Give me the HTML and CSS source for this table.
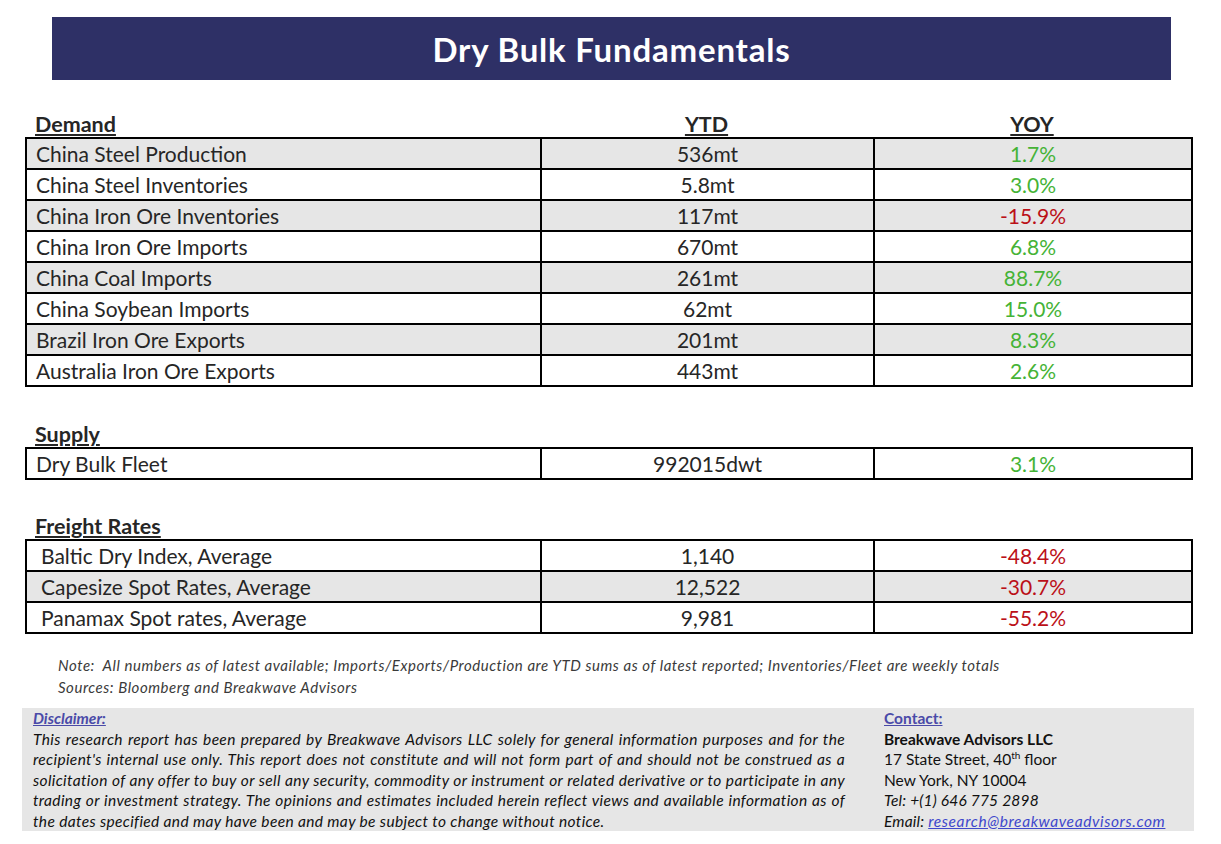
FILE: index.html
```html
<!DOCTYPE html>
<html>
<head>
<meta charset="utf-8">
<link rel="stylesheet" href="styles.css">
</head>
<body>
<div class="page">
  <div class="banner">Dry Bulk Fundamentals</div>

  <div class="section demand">
    <div class="sec-head">
      <span class="sec-title">Demand</span>
      <span class="col-head">YTD</span>
      <span class="col-head">YOY</span>
    </div>
    <table class="data">
      <colgroup><col class="c1"><col class="c2"><col class="c3"></colgroup>
      <tr class="alt"><td>China Steel Production</td><td>536mt</td><td class="up">1.7%</td></tr>
      <tr><td>China Steel Inventories</td><td>5.8mt</td><td class="up">3.0%</td></tr>
      <tr class="alt"><td>China Iron Ore Inventories</td><td>117mt</td><td class="down">-15.9%</td></tr>
      <tr><td>China Iron Ore Imports</td><td>670mt</td><td class="up">6.8%</td></tr>
      <tr class="alt"><td>China Coal Imports</td><td>261mt</td><td class="up">88.7%</td></tr>
      <tr><td>China Soybean Imports</td><td>62mt</td><td class="up">15.0%</td></tr>
      <tr class="alt"><td>Brazil Iron Ore Exports</td><td>201mt</td><td class="up">8.3%</td></tr>
      <tr><td>Australia Iron Ore Exports</td><td>443mt</td><td class="up">2.6%</td></tr>
    </table>
  </div>

  <div class="section supply">
    <div class="sec-head">
      <span class="sec-title">Supply</span>
    </div>
    <table class="data">
      <colgroup><col class="c1"><col class="c2"><col class="c3"></colgroup>
      <tr><td>Dry Bulk Fleet</td><td>992015dwt</td><td class="up">3.1%</td></tr>
    </table>
  </div>

  <div class="section freight">
    <div class="sec-head">
      <span class="sec-title">Freight Rates</span>
    </div>
    <table class="data indent">
      <colgroup><col class="c1"><col class="c2"><col class="c3"></colgroup>
      <tr><td>Baltic Dry Index, Average</td><td>1,140</td><td class="down">-48.4%</td></tr>
      <tr class="alt"><td>Capesize Spot Rates, Average</td><td>12,522</td><td class="down">-30.7%</td></tr>
      <tr><td>Panamax Spot rates, Average</td><td>9,981</td><td class="down">-55.2%</td></tr>
    </table>
  </div>

  <div class="note">
    <p>Note:&nbsp; All numbers as of latest available; Imports/Exports/Production are YTD sums as of latest reported; Inventories/Fleet are weekly totals</p>
    <p>Sources: Bloomberg and Breakwave Advisors</p>
  </div>

  <div class="footer">
    <div class="disclaimer">
      <div class="foot-title">Disclaimer:</div>
      <p>
        <span class="jl">This research report has been prepared by Breakwave Advisors LLC solely for general information purposes and for the</span>
        <span class="jl">recipient's internal use only. This report does not constitute and will not form part of and should not be construed as a</span>
        <span class="jl">solicitation of any offer to buy or sell any security, commodity or instrument or related derivative or to participate in any</span>
        <span class="jl">trading or investment strategy. The opinions and estimates included herein reflect views and available information as of</span>
        <span class="ll">the dates specified and may have been and may be subject to change without notice.</span>
      </p>
    </div>
    <div class="contact">
      <div class="foot-title">Contact:</div>
      <div class="firm">Breakwave Advisors LLC</div>
      <div>17 State Street, 40<sup>th</sup> floor</div>
      <div>New York, NY 10004</div>
      <div class="it">Tel: +(1) 646 775 2898</div>
      <div class="it">Email: <a href="#">research@breakwaveadvisors.com</a></div>
    </div>
  </div>
</div>
</body>
</html>
```

FILE: styles.css
```css
html, body {
  margin: 0;
  padding: 0;
  background: #ffffff;
}
body {
  font-family: Lato, "Open Sans", "Liberation Sans", sans-serif;
  color: #262626;
}
.page {
  width: 1221px;
  padding-top: 17px;
}
.banner {
  margin: 0 0 0 52px;
  width: 1119px;
  height: 63px;
  background: #2e3066;
  color: #ffffff;
  font-weight: 700;
  font-size: 33px;
  line-height: 65px;
  text-align: center;
  letter-spacing: 0.8px;
}
.section {
  margin-left: 25px;
  width: 1166px;
}
.demand { margin-top: 33px; }
.supply { margin-top: 36px; }
.freight { margin-top: 35px; }
.sec-head {
  display: grid;
  grid-template-columns: 515px 333px 318px;
  height: 24px;
  font-size: 21.5px;
  font-weight: 700;
  line-height: 22px;
  color: #262626;
}
.sec-title {
  padding-left: 10px;
  text-decoration: underline;
  text-decoration-thickness: 2px;
  text-underline-offset: 2px;
}
.col-head {
  text-align: center;
  text-decoration: underline;
  text-decoration-thickness: 2px;
  text-underline-offset: 2px;
}
table.data {
  border-collapse: collapse;
  width: 1166px;
  table-layout: fixed;
  font-size: 21px;
}
col.c1 { width: 515px; }
col.c2 { width: 333px; }
col.c3 { width: 318px; }
table.data td {
  border: 2px solid #000;
  height: 29px;
  padding: 0;
  line-height: 29px;
  text-align: center;
  white-space: nowrap;
}
table.data td:first-child {
  text-align: left;
  padding-left: 9px;
}
table.data.indent td:first-child {
  padding-left: 14px;
}
tr.alt td { background: #e6e6e6; }
td.up { color: #45b336; }
td.down { color: #bb1018; }

.note {
  margin: 20px 0 0 58px;
  font-style: italic;
  font-size: 15px;
  letter-spacing: 0.55px;
  color: #3a3a3a;
}
.note p {
  margin: 0;
  line-height: 22px;
}
.footer {
  margin: 10px 0 0 22px;
  width: 1172px;
  height: 123px;
  box-sizing: border-box;
  background: #e6e6e6;
  display: flex;
  padding: 0 0 0 11px;
  font-size: 15.5px;
  line-height: 20.5px;
  color: #111;
}
.disclaimer {
  width: 812px;
  font-style: italic;
  letter-spacing: 0.35px;
}
.disclaimer p {
  margin: 0;
}
.jl {
  display: block;
  text-align: justify;
  text-align-last: justify;
  white-space: nowrap;
}
.ll {
  display: block;
  white-space: nowrap;
}
.foot-title {
  font-weight: 700;
  font-style: italic;
  color: #4a4aa8;
  text-decoration: underline;
  display: inline-block;
  letter-spacing: 0;
}
.contact {
  margin-left: 39px;
}
.contact .foot-title {
  font-style: normal;
}
.firm { font-weight: 700; }
.contact sup {
  font-size: 10px;
  line-height: 0;
  vertical-align: 6px;
}
.it { font-style: italic; letter-spacing: 0.2px; }
.contact a {
  color: #3f48cc;
  text-decoration: underline;
  letter-spacing: 0.6px;
}
```
